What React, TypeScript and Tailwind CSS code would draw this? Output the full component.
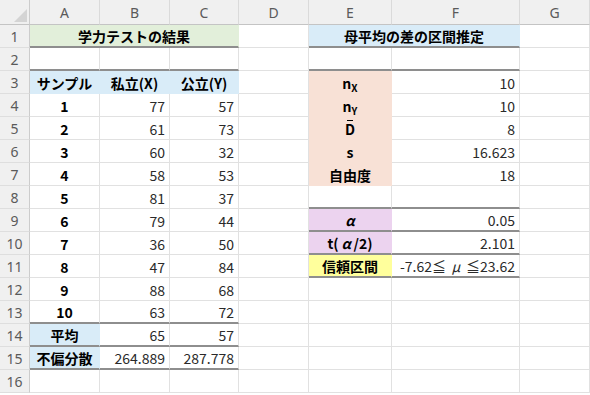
import React from "react";

const FONT = { fontFamily: '"Noto Sans CJK JP", "Noto Sans", sans-serif' };
const HFONT = { fontFamily: '"Noto Sans", "Noto Sans CJK JP", sans-serif' };

const G = "border-r border-b border-[#e1e1e1]";

function RH({ n }: { n: number }) {
  return (
    <div
      className="flex items-center justify-center bg-[#f0f0f0] border-r border-r-[#cccccc] border-b border-b-[#dedede] text-[14px] text-[#5a5a5a]"
      style={HFONT}
    >
      {n}
    </div>
  );
}

function C({
  children,
  className = "",
}: {
  children?: React.ReactNode;
  className?: string;
}) {
  return (
    <div
      className={"box-border flex items-center overflow-hidden whitespace-nowrap text-[14px] text-[#2a2a2a] pt-[2px] " + className}
      style={FONT}
    >
      {children}
    </div>
  );
}

const num = "justify-end pr-[4px]";
const lbl = "justify-center font-bold text-black";
const thickB = "border-b-2 border-b-[#8e8e8e]";

export default function App() {
  const data: [number, number, number][] = [
    [1, 77, 57],
    [2, 61, 73],
    [3, 60, 32],
    [4, 58, 53],
    [5, 81, 37],
    [6, 79, 44],
    [7, 36, 50],
    [8, 47, 84],
    [9, 88, 68],
    [10, 63, 72],
  ];

  const rows: React.ReactNode[] = [];

  rows.push(
    <React.Fragment key="r1">
      <RH n={1} />
      <C className={"col-span-3 justify-center font-bold text-black bg-[#e2efda] border-r border-r-[#e2efda] " + thickB}>
        学力テストの結果
      </C>
      <C className={G} />
      <C className={"col-span-2 justify-center font-bold text-black bg-[#d9ecf8] border-r border-r-[#d9ecf8] " + thickB}>
        母平均の差の区間推定
      </C>
      <C className={G} />
    </React.Fragment>
  );

  rows.push(
    <React.Fragment key="r2">
      <RH n={2} />
      <C className={"border-r border-r-[#e1e1e1] " + thickB} />
      <C className={"border-r border-r-[#e1e1e1] " + thickB} />
      <C className={"border-r border-r-[#e1e1e1] " + thickB} />
      <C className={G} />
      <C className={"border-r border-r-[#e1e1e1] " + thickB} />
      <C className={"border-r border-r-[#e1e1e1] " + thickB} />
      <C className={G} />
    </React.Fragment>
  );

  const peach = "bg-[#f8e1d6] border-r border-b border-transparent";
  const eLabels: Record<number, React.ReactNode> = {
    3: (
      <span className="leading-none">
        n<span className="text-[10px] relative top-[3px] leading-none">X</span>
      </span>
    ),
    4: (
      <span className="leading-none">
        n<span className="text-[10px] relative top-[3px] leading-none">Y</span>
      </span>
    ),
    5: (
      <span className="relative inline-block">
        D
        <span className="absolute left-[2px] right-[2px] top-[1px] h-[1.5px] bg-black" />
      </span>
    ),
    6: "s",
    7: "自由度",
  };
  const fVals: Record<number, string> = {
    3: "10",
    4: "10",
    5: "8",
    6: "16.623",
    7: "18",
  };

  const blue = "bg-[#d9ecf8] border-r border-b border-transparent";
  rows.push(
    <React.Fragment key="r3">
      <RH n={3} />
      <C className={lbl + " " + blue}>サンプル</C>
      <C className={lbl + " " + blue}>私立(X)</C>
      <C className={lbl + " " + blue}>公立(Y)</C>
      <C className={G} />
      <C className={lbl + " " + peach}>{eLabels[3]}</C>
      <C className={num + " " + G}>{fVals[3]}</C>
      <C className={G} />
    </React.Fragment>
  );

  data.forEach(([s, x, y], i) => {
    const r = i + 4;
    const abc = r === 13 ? "border-r border-r-[#e1e1e1] " + thickB : G;
    let eCell: React.ReactNode;
    let fCell: React.ReactNode;
    if (r <= 7) {
      eCell = <C className={lbl + " " + peach}>{eLabels[r]}</C>;
      fCell = <C className={num + " " + G}>{fVals[r]}</C>;
    } else if (r === 8) {
      eCell = <C className={"border-r border-r-[#e1e1e1] " + thickB} />;
      fCell = <C className={"border-r border-r-[#e1e1e1] " + thickB} />;
    } else if (r === 9) {
      eCell = (
        <C className={lbl + " bg-[#ecd3ef] border-r border-r-[#ecd3ef] " + thickB}>
          <span className="italic inline-block w-[14px] text-center">α</span>
        </C>
      );
      fCell = <C className={num + " border-r border-r-[#e1e1e1] " + thickB}>0.05</C>;
    } else if (r === 10) {
      eCell = (
        <C className={lbl + " bg-[#ecd3ef] border-r border-r-[#ecd3ef] " + thickB}>
          t(<span className="italic inline-block w-[15px] text-center">α</span>/2)
        </C>
      );
      fCell = <C className={num + " border-r border-r-[#e1e1e1] " + thickB}>2.101</C>;
    } else if (r === 11) {
      eCell = (
        <C className={lbl + " bg-[#ffff9c] border-r border-r-[#ffff9c] " + thickB}>
          信頼区間
        </C>
      );
      fCell = (
        <C className={num + " border-r border-r-[#e1e1e1] " + thickB}>
          -7.62
          <span className="inline-block w-[14px] text-center">≦</span>
          <span className="italic inline-block w-[20px] text-center">μ</span>
          <span className="inline-block w-[14px] text-center">≦</span>
          23.62
        </C>
      );
    } else {
      eCell = <C className={G} />;
      fCell = <C className={G} />;
    }
    rows.push(
      <React.Fragment key={"r" + r}>
        <RH n={r} />
        <C className={lbl + " " + abc}>{s}</C>
        <C className={num + " " + abc}>{x}</C>
        <C className={num + " " + abc}>{y}</C>
        <C className={G} />
        {eCell}
        {fCell}
        <C className={G} />
      </React.Fragment>
    );
  });

  const lblBlue = lbl + " bg-[#d9ecf8] border-r border-r-[#d9ecf8] " + thickB;
  const numB = num + " border-r border-r-[#e1e1e1] " + thickB;

  rows.push(
    <React.Fragment key="r14">
      <RH n={14} />
      <C className={lblBlue}>平均</C>
      <C className={numB}>65</C>
      <C className={numB}>57</C>
      <C className={G} />
      <C className={G} />
      <C className={G} />
      <C className={G} />
    </React.Fragment>
  );
  rows.push(
    <React.Fragment key="r15">
      <RH n={15} />
      <C className={lblBlue}>不偏分散</C>
      <C className={numB}>264.889</C>
      <C className={numB}>287.778</C>
      <C className={G} />
      <C className={G} />
      <C className={G} />
      <C className={G} />
    </React.Fragment>
  );
  rows.push(
    <React.Fragment key="r16">
      <RH n={16} />
      <C className={G} />
      <C className={G} />
      <C className={G} />
      <C className={G} />
      <C className={G} />
      <C className={G} />
      <C className={G} />
    </React.Fragment>
  );

  const colHead = "flex items-center justify-center bg-[#f0f0f0] border-r border-r-[#dadada] border-b border-b-[#c4c4c4] text-[14px] text-[#5a5a5a] pt-[1px]";

  return (
    <div className="w-[590px] h-[395px] overflow-hidden bg-white">
      <div className="grid grid-cols-[30px_70px_70px_69px_70px_83px_128px_70px] grid-rows-[25px_repeat(16,23px)]">
        <div className="relative bg-[#f0f0f0] border-r border-r-[#cccccc] border-b border-b-[#c4c4c4]">
          <svg className="absolute right-[2px] bottom-[2px]" width="13" height="13" viewBox="0 0 13 13">
            <polygon points="13,0 13,13 0,13" fill="#d4d4d4" />
          </svg>
        </div>
        {["A", "B", "C", "D", "E", "F", "G"].map((l) => (
          <div key={l} className={colHead} style={HFONT}>
            {l}
          </div>
        ))}
        {rows}
      </div>
    </div>
  );
}
